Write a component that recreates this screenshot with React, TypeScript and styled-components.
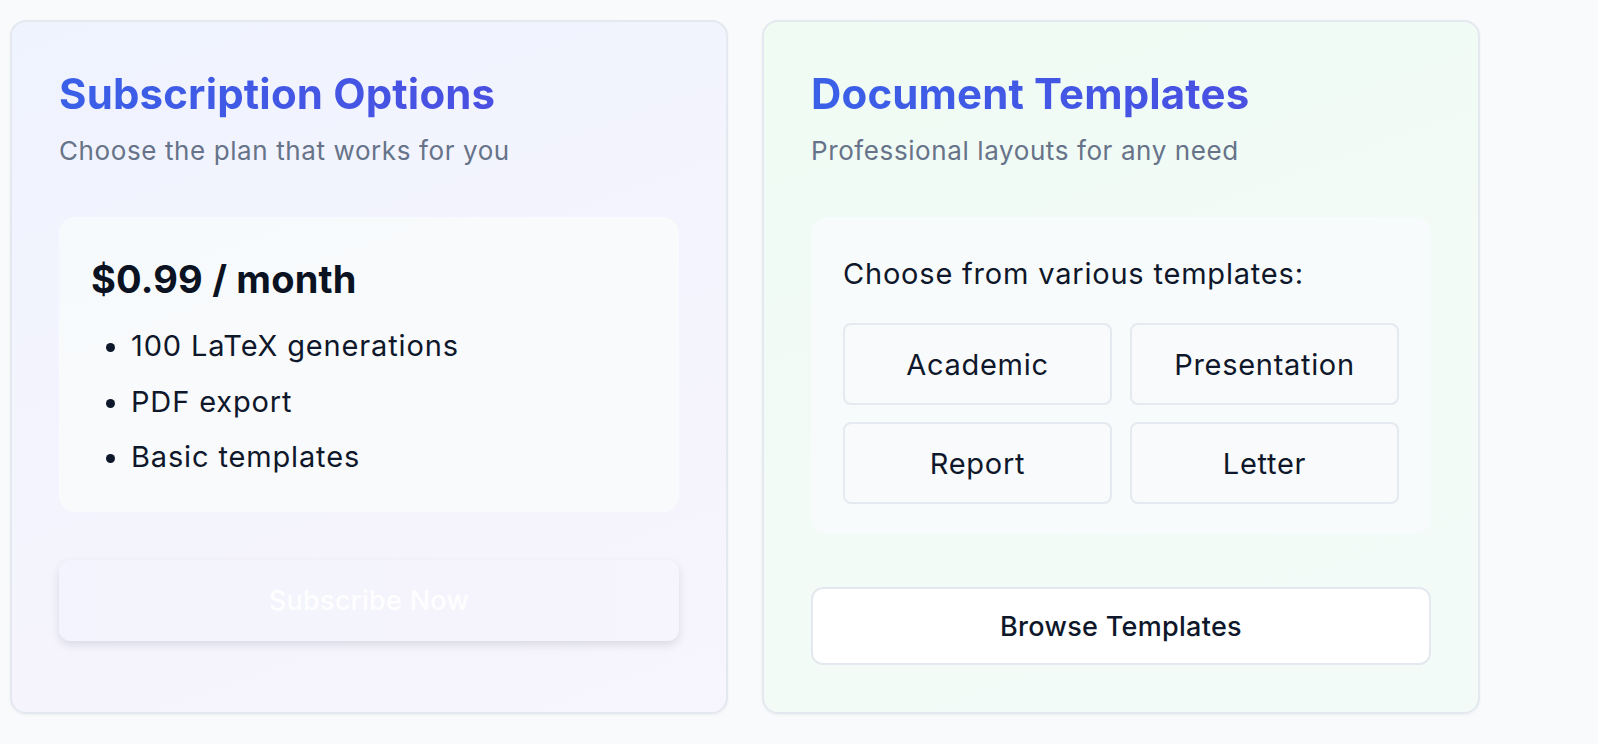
import React from "react";
import styled, { createGlobalStyle } from "styled-components";

const GlobalStyle = createGlobalStyle`
  html, body {
    margin: 0;
    padding: 0;
    background: #f8fafc;
    font-family: Inter, "Noto Sans", "Liberation Sans", sans-serif;
    color: #0f172a;
  }
  * { box-sizing: border-box; }
`;

const Page = styled.div`
  display: flex;
  align-items: stretch;
  gap: 34px;
  padding: 20px 10px;
`;

const Card = styled.section<{ $tone: "blue" | "green" }>`
  width: 718px;
  display: flex;
  flex-direction: column;
  padding: 47px;
  border: 2px solid #e4e8ef;
  border-radius: 16px;
  box-shadow: 0 1px 3px rgba(15, 23, 42, 0.05);
  background: ${(p) =>
    p.$tone === "blue"
      ? "linear-gradient(160deg, #eff3fe 0%, #f4f4fe 50%, #f7f5fd 100%)"
      : "linear-gradient(160deg, #f0fbf4 0%, #f2fbf6 50%, #f3fbf8 100%)"};
`;

const Title = styled.h2`
  margin: 1px 0 0;
  font-size: 42px;
  line-height: 48px;
  font-weight: 700;
  letter-spacing: 0.15px;
  background: linear-gradient(90deg, #3a60e8 0%, #4a50e1 100%);
  -webkit-background-clip: text;
  background-clip: text;
  color: transparent;
  align-self: flex-start;
`;

const Subtitle = styled.p`
  margin: 15px 0 0;
  font-size: 26px;
  line-height: 36px;
  letter-spacing: 0.6px;
  color: #667389;
`;

const Panel = styled.div<{ $pb?: number }>`
  margin-top: 48px;
  padding: 32px 32px ${(p) => p.$pb ?? 32}px;
  border-radius: 16px;
  background: rgba(248, 250, 252, 0.85);
`;

const Price = styled.h3`
  margin: 10px 0 0;
  font-size: 38px;
  line-height: 40px;
  font-weight: 700;
  letter-spacing: 0.2px;
  color: #0b1222;
`;

const Features = styled.ul`
  margin: 26px 0 0;
  padding-left: 40px;
`;

const Feature = styled.li`
  font-size: 29px;
  line-height: 42px;
  letter-spacing: 0.85px;
  color: #0f172a;
  & + & {
    margin-top: 13.5px;
  }
`;

const PrimaryButton = styled.button`
  margin-top: 48px;
  height: 81px;
  width: 100%;
  border: none;
  border-radius: 12px;
  background: linear-gradient(90deg, #f3f4fd 0%, #f6f4fd 100%);
  box-shadow: 0 4px 10px rgba(30, 41, 59, 0.13);
  color: rgba(255, 255, 255, 0.95);
  font-family: inherit;
  font-size: 27px;
  font-weight: 500;
  letter-spacing: 0.3px;
`;

const PanelText = styled.p`
  margin: 4px 0 0;
  font-size: 29px;
  line-height: 42px;
  letter-spacing: 0.8px;
  color: #0f172a;
`;

const TemplateGrid = styled.div`
  margin-top: 28px;
  display: grid;
  grid-template-columns: 1fr 1fr;
  column-gap: 18px;
  row-gap: 17px;
`;

const TemplateButton = styled.button`
  height: 82px;
  border: 2px solid #e5e9f0;
  border-radius: 8px;
  background: #f8fafc;
  font-family: inherit;
  font-size: 29px;
  font-weight: 400;
  letter-spacing: 0.7px;
  color: #0f172a;
`;

const OutlineButton = styled.button`
  margin-top: 53px;
  height: 78px;
  width: 100%;
  border: 2px solid #e4e8ef;
  border-radius: 12px;
  background: #ffffff;
  font-family: inherit;
  font-size: 27px;
  font-weight: 500;
  letter-spacing: 0.3px;
  color: #0f172a;
`;

const templates = ["Academic", "Presentation", "Report", "Letter"];
const features = ["100 LaTeX generations", "PDF export", "Basic templates"];

export default function App() {
  return (
    <>
      <GlobalStyle />
      <Page>
        <Card $tone="blue">
          <Title>Subscription Options</Title>
          <Subtitle>Choose the plan that works for you</Subtitle>
          <Panel $pb={34}>
            <Price>$0.99 / month</Price>
            <Features>
              {features.map((f) => (
                <Feature key={f}>{f}</Feature>
              ))}
            </Features>
          </Panel>
          <PrimaryButton>Subscribe Now</PrimaryButton>
        </Card>
        <Card $tone="green">
          <Title>Document Templates</Title>
          <Subtitle>Professional layouts for any need</Subtitle>
          <Panel $pb={30}>
            <PanelText>Choose from various templates:</PanelText>
            <TemplateGrid>
              {templates.map((t) => (
                <TemplateButton key={t}>{t}</TemplateButton>
              ))}
            </TemplateGrid>
          </Panel>
          <OutlineButton>Browse Templates</OutlineButton>
        </Card>
      </Page>
    </>
  );
}
